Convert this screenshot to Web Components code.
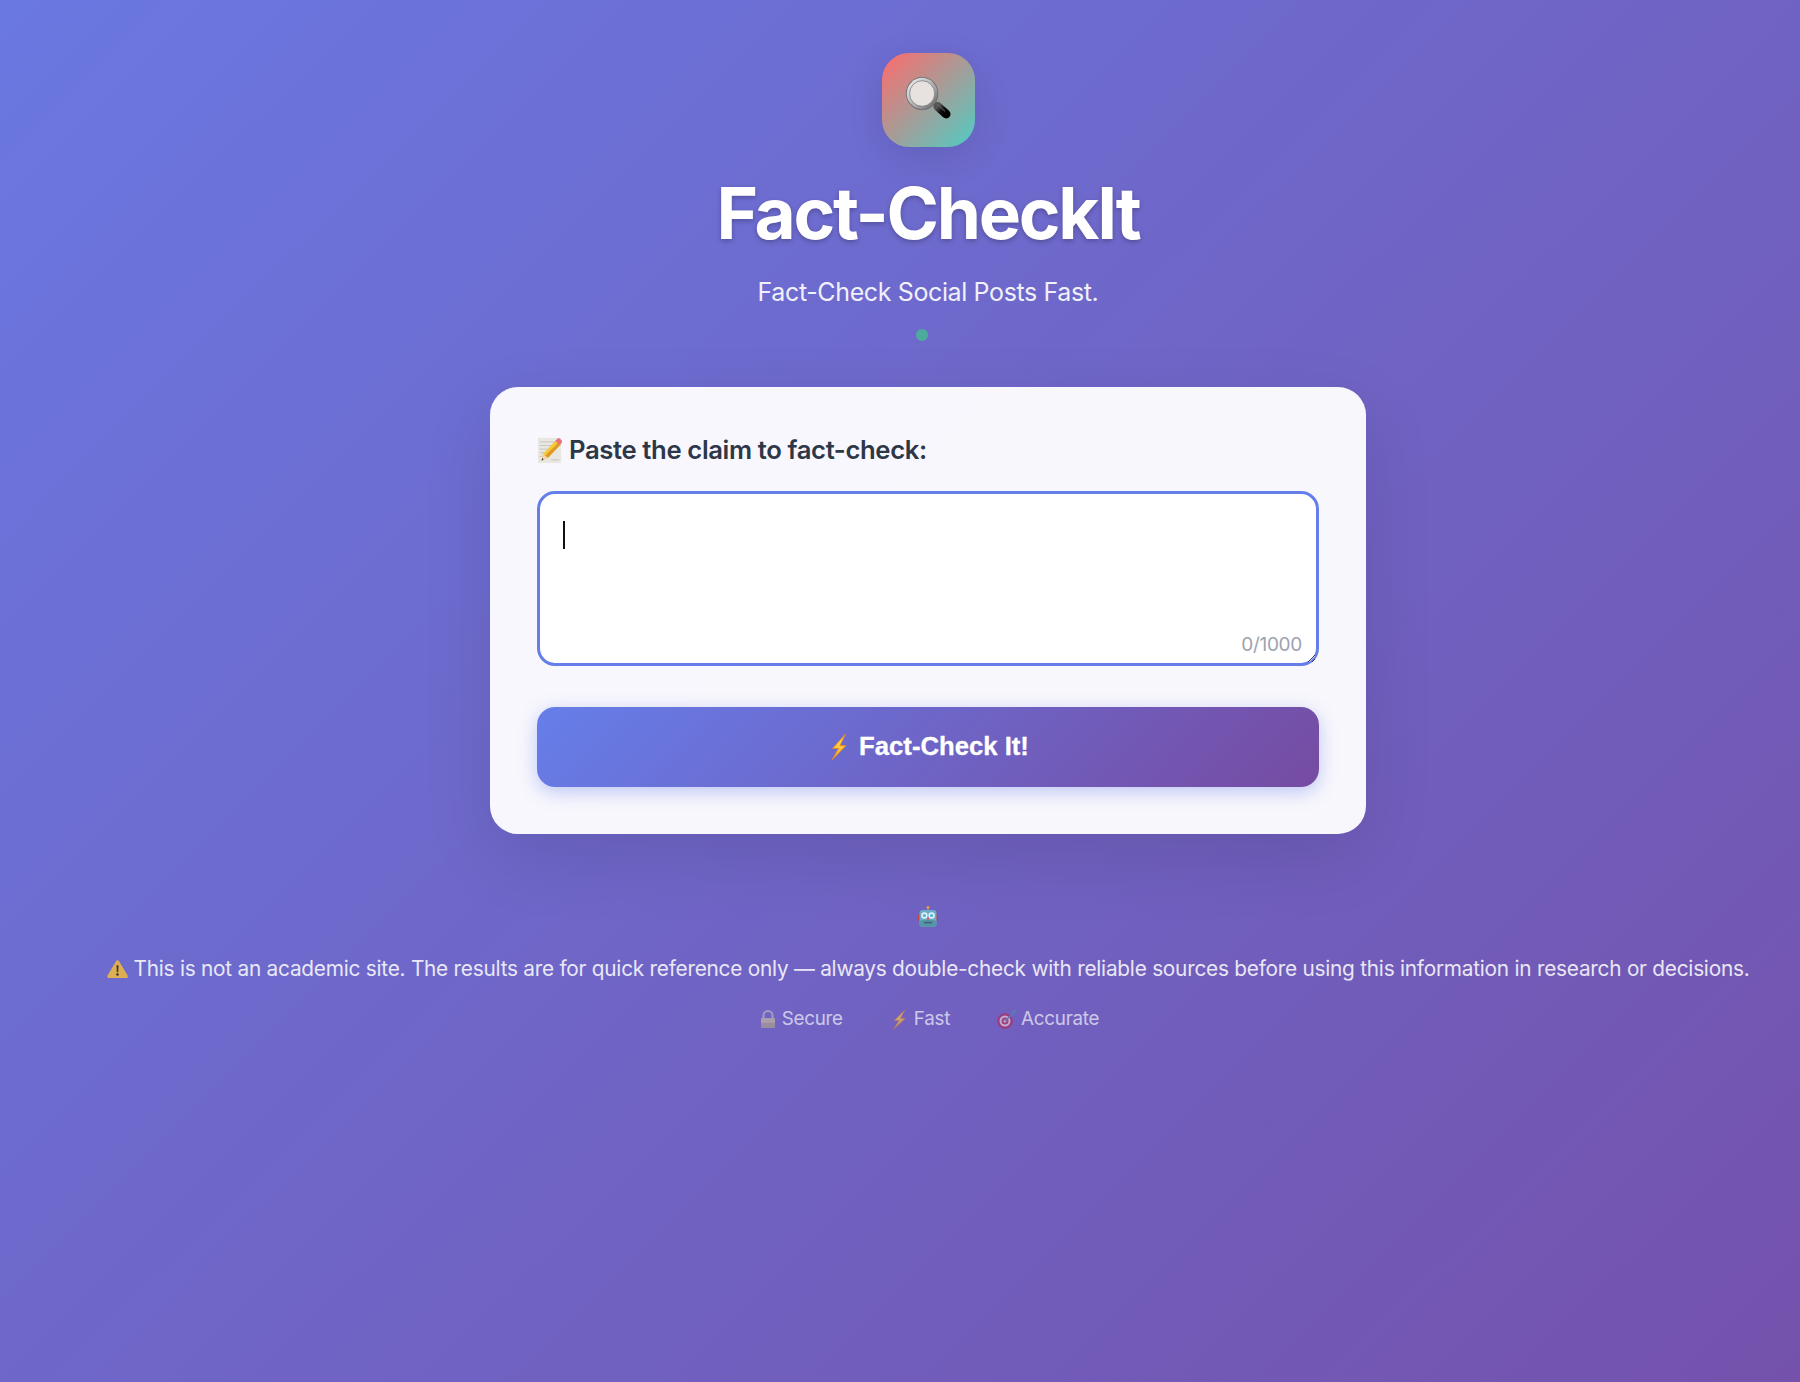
<!DOCTYPE html>
<html lang="en">
<head>
<meta charset="utf-8">
<title>Fact-CheckIt</title>
<style>
  html, body { margin: 0; min-height: 100%; }
  body {
    min-height: 1382px;
    overflow: hidden;
    background: linear-gradient(135deg, #6a78e1 0%, #7452ac 100%);
    font-family: Inter, "Liberation Sans", sans-serif;
  }
</style>
</head>
<body>
<fc-app>
  <fc-header title="Fact-CheckIt" tagline="Fact-Check Social Posts Fast."></fc-header>
  <fc-card>
    <fc-claim-form label="Paste the claim to fact-check:" limit="1000"></fc-claim-form>
  </fc-card>
  <fc-footer>This is not an academic site. The results are for quick reference only — always double-check with reliable sources before using this information in research or decisions.</fc-footer>
</fc-app>

<script>
const ICONS = {
  search: `
    <defs>
      <linearGradient id="g" x1="0" y1="0" x2="1" y2="1"><stop offset="0" stop-color="#f4f4f4"/><stop offset=".6" stop-color="#a8a8a8"/><stop offset="1" stop-color="#5c5c5c"/></linearGradient>
      <linearGradient id="h" x1="0" y1="0" x2="1" y2="1"><stop offset="0" stop-color="#555"/><stop offset=".5" stop-color="#111"/><stop offset="1" stop-color="#000"/></linearGradient>
    </defs>
    <path d="M26 25l4-4 5 5-4 4z" fill="#8a8a8a"/>
    <path d="M33.500 29.500l8.500 7.500" stroke="url(#h)" stroke-width="9" stroke-linecap="round"/>
    <path d="M33 27.500l7.500 6.500" stroke="#6a6a6a" stroke-width="1" stroke-linecap="round"/>
    <circle cx="17.500" cy="16.500" r="16.500" fill="#666c70"/>
    <circle cx="17.500" cy="16.500" r="15.700" fill="url(#g)"/>
    <circle cx="17.500" cy="16.500" r="12.800" fill="#e7e1df"/>
    <circle cx="17.500" cy="16.500" r="12.800" fill="none" stroke="#6d7175" stroke-width=".7"/>`,
  memo: `
    <rect x="0" y="1" width="26" height="28" fill="#e9e7e2"/>
    <g fill="#c4c2bd"><rect x="2" y="5" width="18" height="1"/><rect x="2" y="9" width="16" height="1"/><rect x="2" y="13" width="12" height="1"/>
    <rect x="2" y="17" width="8" height="1"/><rect x="2" y="21" width="5" height="1"/><rect x="15" y="25" width="9" height="1"/></g>
    <path d="M20 3.500l5.500 5-14.500 15-7 3 1.500-7.500z" fill="#f7c93e"/>
    <path d="M23 6l2.500 2.500-14.500 15-3-2.500z" fill="#e09a24"/>
    <path d="M5.500 19l5.500 4.500-7 3z" fill="#f0d6b0"/>
    <path d="M4.700 23.500l1.700 1.700-2.400 1.300z" fill="#444"/>
    <path d="M19.500 4.500l2.500-2.700c.7-.7 1.700-.7 2.400 0l2.300 2.100c.7.700.7 1.700 0 2.400l-2.300 2.500z" fill="#e8737c"/>`,
  bolt: `
    <defs><linearGradient id="b" x1="0" y1="0" x2="0" y2="1"><stop offset="0" stop-color="#ffe25a"/><stop offset="1" stop-color="#fbb01f"/></linearGradient></defs>
    <path d="M14.500 0L1.500 14.500h6L1 26l14-14.500H9z" fill="url(#b)" stroke="#e2852a" stroke-width=".9" stroke-linejoin="round"/>`,
  robot: `
    <circle cx="10" cy="1.500" r="1.500" fill="#f29a2e"/>
    <rect x="9.300" y="2.500" width="1.400" height="2.500" fill="#8f97a0"/>
    <rect x="0" y="8" width="3" height="7" rx="1.200" fill="#c6424a"/>
    <rect x="17" y="8" width="3" height="7" rx="1.200" fill="#c6424a"/>
    <rect x="1.500" y="4" width="17" height="17" rx="3.200" fill="#6cacc6"/>
    <rect x="1.500" y="14" width="17" height="7" rx="3" fill="#5796aa"/>
    <circle cx="6.400" cy="9.500" r="3.200" fill="#dff2f8"/><circle cx="13.600" cy="9.500" r="3.200" fill="#dff2f8"/>
    <circle cx="6.400" cy="9.500" r="1.600" fill="#4ab4dc"/><circle cx="13.600" cy="9.500" r="1.600" fill="#4ab4dc"/>
    <path d="M10 10.500l1.500 3h-3z" fill="#e0525a"/>
    <rect x="6" y="15.800" width="8" height="1.600" fill="#3d6373"/>`,
  warning: `
    <path d="M10.500 1.300c.7 0 1.200.4 1.600 1l8.500 15c.7 1.200 0 2.700-1.500 2.700H2c-1.500 0-2.200-1.500-1.500-2.700l8.500-15c.4-.6.900-1 1.500-1z" fill="#f0bb3e"/>
    <path d="M9.500 6.500h2l-.3 7.500H9.800z" fill="#33291a"/><circle cx="10.500" cy="16.300" r="1.300" fill="#33291a"/>`,
  lock: `
    <path d="M3.500 8V5.500a4.500 4.500 0 0 1 9 0V8" fill="none" stroke="#bdbdbd" stroke-width="2"/>
    <rect x="1" y="8" width="14" height="10" rx="1" fill="#cbbf9f"/>
    <rect x="1" y="13" width="14" height="5" rx="1" fill="#b0a68c"/>`,
  target: `
    <circle cx="8" cy="12" r="7.800" fill="#b52a58"/>
    <circle cx="8" cy="12" r="5.500" fill="#e8d7dc"/>
    <circle cx="8" cy="12" r="3.500" fill="#bd3160"/>
    <circle cx="8" cy="12" r="1.500" fill="#e8d7dc"/>
    <path d="M8 12L18 3" stroke="#4e8bb5" stroke-width="1.500"/>
    <path d="M15.500 2l3.500-1.500-1 3.800-2.500.7z" fill="#4e8bb5"/>`
}

const BOXES = {
  search: '0 0 48 46', memo: '0 0 27 29', bolt: '0 0 16 26', robot: '0 0 20 21',
  warning: '0 0 21 21', lock: '0 0 16 18', target: '0 0 20 20'
}

class FcIcon extends HTMLElement {
  connectedCallback() {
    const name = this.getAttribute('name')
    const w = this.getAttribute('w')
    const h = this.getAttribute('h')
    this.attachShadow({ mode: 'open' }).innerHTML = `
      <style>
        :host { display: inline-flex; flex: none; width: ${w}px; height: ${h}px; }
        svg { width: 100%; height: 100%; display: block; }
      </style>
      <svg viewBox="${BOXES[name]}" preserveAspectRatio="none" aria-hidden="true">${ICONS[name]}</svg>`
  }
}

class FcApp extends HTMLElement {
  connectedCallback() {
    this.attachShadow({ mode: 'open' }).innerHTML = `
      <style>
        :host {
          display: flex;
          flex-direction: column;
          align-items: center;
          width: 1856px;
          padding-top: 53px;
        }
      </style>
      <slot></slot>`
  }
}

class FcHeader extends HTMLElement {
  connectedCallback() {
    this.attachShadow({ mode: 'open' }).innerHTML = `
      <style>
        :host {
          display: flex;
          flex-direction: column;
          align-items: center;
          color: #fff;
          margin-bottom: 46px;
        }
        .logo {
          width: 93px; height: 94px;
          border-radius: 27px;
          display: flex;
          align-items: center;
          justify-content: center;
          background: linear-gradient(135deg, #ff6b6b, #4ecdc4);
          box-shadow: 0 9px 37px rgba(0,0,0,.1);
          margin-bottom: 27px;
        }
        h1 {
          margin: 0;
          font-size: 71px;
          line-height: 78px;
          font-weight: 700;
          letter-spacing: -.032em;
          text-shadow: 0 2px 5px rgba(0,0,0,.25);
        }
        p {
          margin: 24px 0 0;
          font-size: 25px;
          line-height: 32px;
          font-weight: 400;
          letter-spacing: -.015em;
          opacity: .9;
        }
        .dot {
          width: 12px; height: 12px;
          border-radius: 50%;
          background: #4dab9d;
          margin: 21px 12px 0 0;
        }
      </style>
      <div class="logo"><fc-icon name="search" w="47" h="46"></fc-icon></div>
      <h1>${this.getAttribute('title')}</h1>
      <p>${this.getAttribute('tagline')}</p>
      <div class="dot"></div>`
  }
}

class FcCard extends HTMLElement {
  connectedCallback() {
    this.attachShadow({ mode: 'open' }).innerHTML = `
      <style>
        :host {
          display: block;
          box-sizing: border-box;
          width: 876px;
          padding: 47px;
          border-radius: 28px;
          background: rgba(255,255,255,.95);
          box-shadow: 0 23px 70px rgba(0,0,0,.1);
        }
      </style>
      <slot></slot>`
  }
}

class FcClaimForm extends HTMLElement {
  connectedCallback() {
    const limit = this.getAttribute('limit')
    this.attachShadow({ mode: 'open' }).innerHTML = `
      <style>
        :host { display: block; font-family: Inter, "Liberation Sans", sans-serif; }
        label {
          display: flex;
          align-items: center;
          gap: 7px;
          padding: 1px 0 0 1px;
          font-size: 25.700px;
          line-height: 30px;
          font-weight: 600;
          letter-spacing: -.015em;
          color: #2d3748;
          margin-bottom: 26px;
        }
        .field { position: relative; display: flex; }
        textarea {
          box-sizing: border-box;
          width: 782px;
          height: 175px;
          padding: 21px;
          border: 3px solid #667eea;
          border-radius: 18px;
          outline: none;
          background: #fff;
          font: 400 21px/1.4 Inter, "Liberation Sans", sans-serif;
          resize: vertical;
          caret-color: transparent;
        }
        .caret {
          position: absolute;
          left: 26px; top: 30px;
          width: 1.500px; height: 28px;
          background: #111;
        }
        .count {
          position: absolute;
          right: 17px; bottom: 9px;
          font-size: 19px;
          line-height: 24px;
          letter-spacing: -.015em;
          color: #9ca3af;
        }
        button {
          display: flex;
          align-items: center;
          justify-content: center;
          gap: 12px;
          width: 782px;
          height: 80px;
          margin-top: 41px;
          padding: 0 0 0 4px;
          border: 0;
          border-radius: 18px;
          color: #fff;
          background: linear-gradient(135deg, #667eea, #764ba2);
          box-shadow: 0 5px 18px rgba(102,126,234,.4);
          font: 700 25.700px/1 "Liberation Sans", sans-serif;
          -webkit-text-stroke: .3px #fff;
        }
      </style>
      <label for="claim"><fc-icon name="memo" w="24" h="26"></fc-icon>${this.getAttribute('label')}</label>
      <div class="field">
        <textarea id="claim" maxlength="${limit}"></textarea>
        <span class="caret"></span>
        <span class="count">0/${limit}</span>
      </div>
      <button type="button"><fc-icon name="bolt" w="16" h="26"></fc-icon>Fact-Check It!</button>`
  }
}

class FcFooter extends HTMLElement {
  connectedCallback() {
    this.attachShadow({ mode: 'open' }).innerHTML = `
      <style>
        :host {
          display: flex;
          flex-direction: column;
          align-items: center;
          margin-top: 72px;
          color: #fff;
          font-family: Inter, "Liberation Sans", sans-serif;
          letter-spacing: -.015em;
        }
        .note {
          display: flex;
          align-items: center;
          gap: 6px;
          margin-top: 28px;
          font-size: 20.800px;
          line-height: 28px;
          white-space: nowrap;
          opacity: .85;
        }
        .features {
          display: flex;
          gap: 47px;
          margin: 23px 0 0 3px;
          font-size: 18.800px;
          line-height: 26px;
          opacity: .65;
        }
        .features span { display: flex; align-items: center; gap: 6px; }
        .features .fast { margin-left: 3px; gap: 8px; }
        .features .accurate { gap: 4px; }
      </style>
      <fc-icon name="robot" w="20" h="21"></fc-icon>
      <div class="note"><fc-icon name="warning" w="21" h="20"></fc-icon><span><slot></slot></span></div>
      <div class="features">
        <span><fc-icon name="lock" w="16" h="18"></fc-icon>Secure</span>
        <span class="fast"><fc-icon name="bolt" w="13" h="19"></fc-icon>Fast</span>
        <span class="accurate"><fc-icon name="target" w="20" h="20"></fc-icon>Accurate</span>
      </div>`
  }
}

customElements.define('fc-icon', FcIcon)
customElements.define('fc-app', FcApp)
customElements.define('fc-header', FcHeader)
customElements.define('fc-card', FcCard)
customElements.define('fc-claim-form', FcClaimForm)
customElements.define('fc-footer', FcFooter)
</script>
</body>
</html>
